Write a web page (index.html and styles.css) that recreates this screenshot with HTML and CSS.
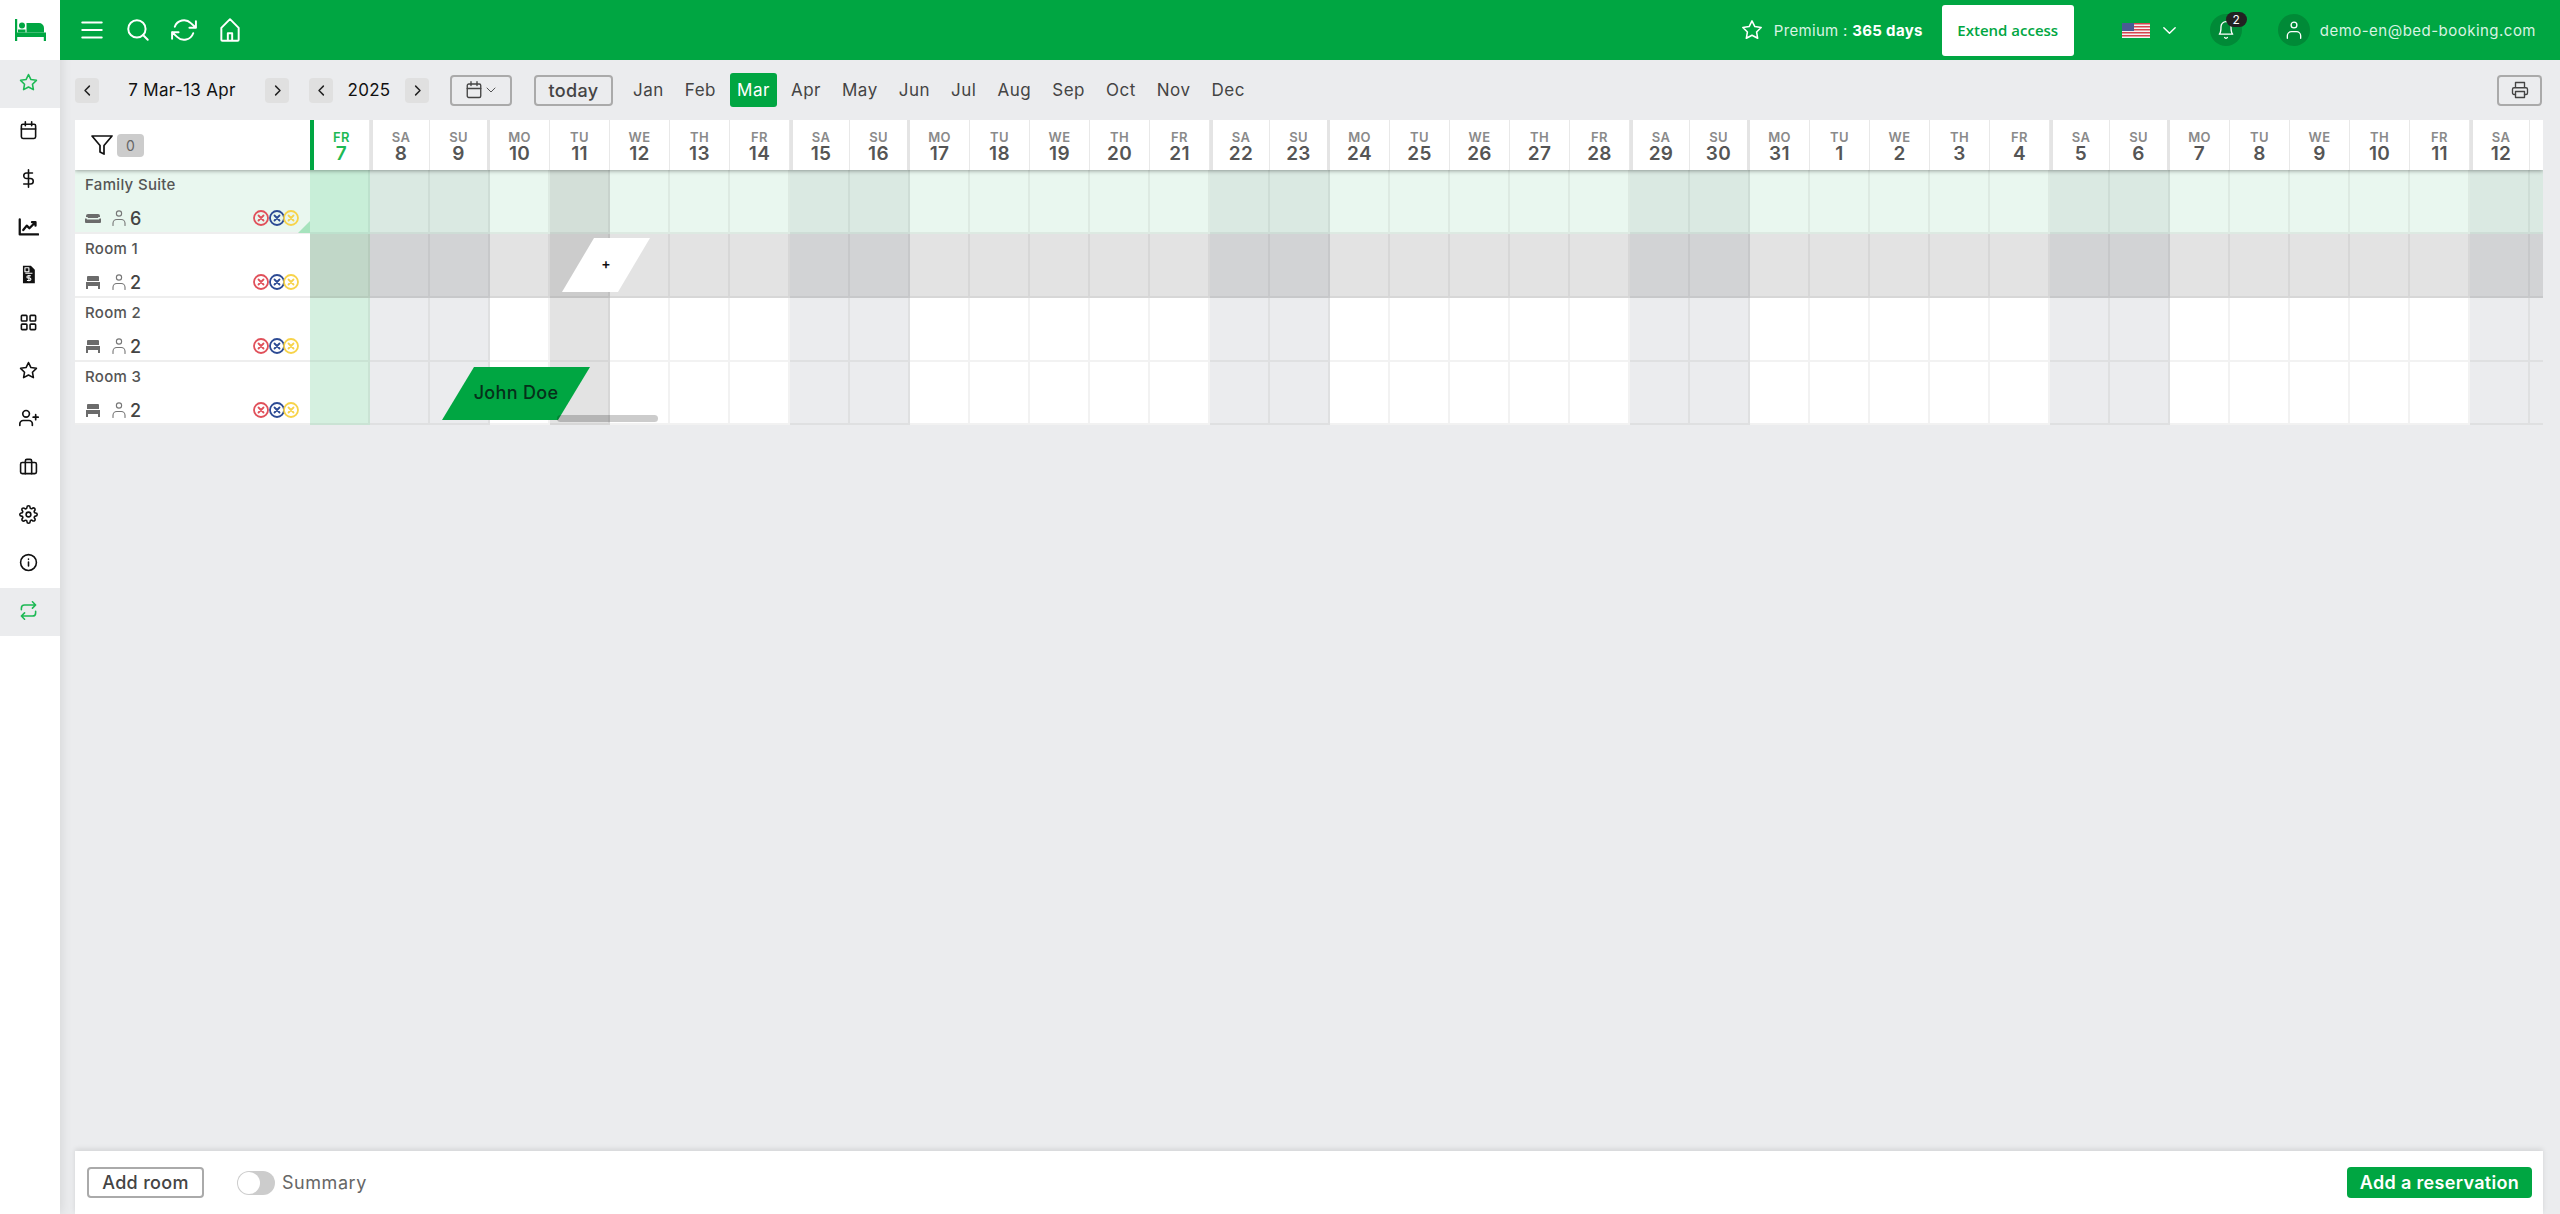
FILE: index.html
```html
<!DOCTYPE html>
<html>
<head>
	<meta charset="utf-8">
	<meta name="viewport" content="width=device-width, initial-scale=1">
	<title>Calendar</title>
	<link rel="stylesheet" href="styles.css">
</head>
<body>
	<svg class="defs">
		<symbol id="star" viewBox="0 0 24 24"><polygon points="12 2 15.09 8.26 22 9.27 17 14.14 18.18 21.02 12 17.77 5.82 21.02 7 14.14 2 9.27 8.91 8.26 12 2"/></symbol>
		<symbol id="user" viewBox="0 0 24 24"><path d="M20 22v-3a5 5 0 0 0-5-5H9a5 5 0 0 0-5 5v3"/><circle cx="12" cy="6" r="3.5"/></symbol>
		<symbol id="bed" viewBox="0 0 16 16"><path class="solid" d="M3 2h10a1 1 0 0 1 1 1v4H2V3a1 1 0 0 1 1-1zM1 8h14v4H1zM1 12h2v3H1zM13 12h2v3h-2z"/></symbol>
		<symbol id="sofa" viewBox="0 0 16 16"><path class="solid" d="M3 4h10a2 2 0 0 1 2 2v1h-1a1 1 0 0 0-1 1H3a1 1 0 0 0-1-1H1V6a2 2 0 0 1 2-2zM0 8.500h1.500l.5 1h12l.5-1H16V12a1 1 0 0 1-1 1H1a1 1 0 0 1-1-1z"/></symbol>
		<symbol id="x-dot" viewBox="0 0 16 16"><circle cx="8" cy="8" r="7"/><path d="M5.500 5.500l5 5M10.500 5.500l-5 5"/></symbol>
		<symbol id="left" viewBox="0 0 24 24"><polyline points="15 5 8 12 15 19"/></symbol>
		<symbol id="right" viewBox="0 0 24 24"><polyline points="9 5 16 12 9 19"/></symbol>
	</svg>

	<nav class="sidebar">
		<div class="logo">
			<svg class="bed-logo" viewBox="0 0 31 22"><path d="M0 0h2.200v13.500H31V22h-2.200v-4H2.200v4H0z"/><circle cx="7" cy="6.500" r="3"/><path d="M11.500 4h12.500a5 5 0 0 1 5 5v4.500H11.500zM3 10.500h7.500v3H3z"/></svg>
		</div>
		<a class="nav-item on"><svg class="ic"><use href="#star"/></svg></a>
		<a class="nav-item"><svg class="ic" viewBox="0 0 24 24"><rect x="3" y="4" width="18" height="18" rx="2"/><path d="M16 1v5M8 1v5M3 10h18"/></svg></a>
		<a class="nav-item"><svg class="ic" viewBox="0 0 24 24"><path d="M12 1v22M17 5H9.500a3.500 3.500 0 0 0 0 7h5a3.500 3.500 0 0 1 0 7H6"/></svg></a>
		<a class="nav-item"><svg class="ic bold" viewBox="0 0 24 24"><path d="M2 4v17h21"/><path d="M6 16l4-5 3 3 6-6M16 7h4v4"/></svg></a>
		<a class="nav-item"><svg class="ic" viewBox="0 0 24 24"><path class="solid" d="M5 1h10l5 5v17H5z"/><path class="knock" d="M7.500 3.500h5v5h-5zM8 10.500h9"/><path class="knock" d="M15 13.500h-3.500a1.500 1.500 0 0 0 0 3h2a1.500 1.500 0 0 1 0 3H10M12.500 12.500v8"/></svg></a>
		<a class="nav-item"><svg class="ic" viewBox="0 0 24 24"><rect x="3" y="3" width="7" height="7" rx="1"/><rect x="14" y="3" width="7" height="7" rx="1"/><rect x="14" y="14" width="7" height="7" rx="1"/><rect x="3" y="14" width="7" height="7" rx="1"/></svg></a>
		<a class="nav-item"><svg class="ic"><use href="#star"/></svg></a>
		<a class="nav-item"><svg class="ic wide" viewBox="0 0 24 24"><path d="M16 21v-2a4 4 0 0 0-4-4H5a4 4 0 0 0-4 4v2"/><circle cx="8.500" cy="7" r="4"/><path d="M20 8v6M23 11h-6"/></svg></a>
		<a class="nav-item"><svg class="ic" viewBox="0 0 24 24"><rect x="2" y="7" width="20" height="14" rx="2"/><path d="M16 21V5a2 2 0 0 0-2-2h-4a2 2 0 0 0-2 2v16"/></svg></a>
		<a class="nav-item"><svg class="ic" viewBox="0 0 24 24"><circle cx="12" cy="12" r="3"/><path d="M19.400 15a1.650 1.650 0 0 0 .33 1.820l.06.06a2 2 0 0 1 0 2.830 2 2 0 0 1-2.830 0l-.06-.06a1.650 1.650 0 0 0-1.820-.33 1.650 1.650 0 0 0-1 1.510V21a2 2 0 0 1-2 2 2 2 0 0 1-2-2v-.09A1.650 1.650 0 0 0 9 19.400a1.650 1.650 0 0 0-1.820.33l-.06.06a2 2 0 0 1-2.830 0 2 2 0 0 1 0-2.830l.06-.06a1.650 1.650 0 0 0 .33-1.820 1.650 1.650 0 0 0-1.510-1H3a2 2 0 0 1-2-2 2 2 0 0 1 2-2h.09A1.650 1.650 0 0 0 4.600 9a1.650 1.650 0 0 0-.33-1.820l-.06-.06a2 2 0 0 1 0-2.830 2 2 0 0 1 2.830 0l.06.06a1.650 1.650 0 0 0 1.820.33H9a1.650 1.650 0 0 0 1-1.510V3a2 2 0 0 1 2-2 2 2 0 0 1 2 2v.09a1.650 1.650 0 0 0 1 1.510 1.650 1.650 0 0 0 1.820-.33l.06-.06a2 2 0 0 1 2.830 0 2 2 0 0 1 0 2.830l-.06.06a1.650 1.650 0 0 0-.33 1.820V9a1.650 1.650 0 0 0 1.510 1H21a2 2 0 0 1 2 2 2 2 0 0 1-2 2h-.09a1.650 1.650 0 0 0-1.510 1z"/></svg></a>
		<a class="nav-item"><svg class="ic" viewBox="0 0 24 24"><circle cx="12" cy="12" r="10"/><path d="M12 16.500v-5M12 8v-.5"/></svg></a>
		<a class="nav-item on"><svg class="ic" viewBox="0 0 24 24"><path d="M17 1l4 4-4 4M3 11V9a4 4 0 0 1 4-4h14M7 23l-4-4 4-4M21 13v2a4 4 0 0 1-4 4H3"/></svg></a>
	</nav>

	<div class="main">
		<header class="topbar">
			<svg class="top-ic" viewBox="0 0 24 24"><path d="M3 5h18M3 12h18M3 19h18"/></svg>
			<svg class="top-ic" viewBox="0 0 24 24"><circle cx="11" cy="11" r="8"/><path d="M21 21l-4.350-4.350"/></svg>
			<svg class="top-ic" viewBox="0 0 24 24"><path d="M23 4v6h-6M1 20v-6h6M3.510 9a9 9 0 0 1 14.850-3.360L23 10M1 14l4.640 4.360A9 9 0 0 0 20.490 15"/></svg>
			<svg class="top-ic" viewBox="0 0 24 24"><path d="M4 21V10l8-8 8 8v11a1 1 0 0 1-1 1H5a1 1 0 0 1-1-1zM10 22v-7h4v7"/></svg>

			<div class="account">
				<svg class="premium-star"><use href="#star"/></svg>
				<span class="premium">Premium : <b>365 days</b></span>
				<a class="extend">Extend access</a>
				<svg class="flag" viewBox="0 0 28 15">
					<rect width="28" height="15" fill="#f4f4f4"/>
					<path fill="#d8434e" d="M0 0h28v1.500H0zM0 3h28v1.500H0zM0 6h28v1.500H0zM0 9h28v1.500H0zM0 12h28v1.500H0z"/>
					<rect width="12" height="8" fill="#4a5a94"/>
				</svg>
				<svg class="chev" viewBox="0 0 24 24"><path d="M4 8l8 8 8-8"/></svg>
				<span class="round bell">
					<svg viewBox="0 0 24 24"><path d="M18 8A6 6 0 0 0 6 8c0 7-2 9-2 9h16s-2-2-2-9zM13.700 21a2 2 0 0 1-3.400 0"/></svg>
					<span class="badge">2</span>
				</span>
				<span class="round person"><svg><use href="#user"/></svg></span>
				<span class="email">demo-en@bed-booking.com</span>
			</div>
		</header>

		<div class="toolbar">
			<button class="step"><svg><use href="#left"/></svg></button>
			<span class="range">7 Mar-13 Apr</span>
			<button class="step"><svg><use href="#right"/></svg></button>
			<button class="step year-prev"><svg><use href="#left"/></svg></button>
			<span class="year">2025</span>
			<button class="step"><svg><use href="#right"/></svg></button>
			<button class="outline picker">
				<svg viewBox="0 0 24 24"><rect x="3" y="4" width="18" height="18" rx="2"/><path d="M16 1v5M8 1v5M3 10h18"/></svg>
				<svg class="mini" viewBox="0 0 24 24"><path d="M4 8l8 8 8-8"/></svg>
			</button>
			<button class="outline today">today</button>
			<div class="months">
				<a>Jan</a><a>Feb</a><a class="on">Mar</a><a>Apr</a><a>May</a><a>Jun</a><a>Jul</a><a>Aug</a><a>Sep</a><a>Oct</a><a>Nov</a><a>Dec</a>
			</div>
			<button class="outline print">
				<svg viewBox="0 0 24 24"><path d="M6 9V2h12v7M6 18H4a2 2 0 0 1-2-2v-5a2 2 0 0 1 2-2h16a2 2 0 0 1 2 2v5a2 2 0 0 1-2 2h-2"/><rect x="6" y="14" width="12" height="8"/></svg>
			</button>
		</div>

		<div class="planner">
			<div class="head">
				<div class="filter">
					<svg viewBox="0 0 24 24"><polygon points="22 3 2 3 10 12.460 10 19 14 21 14 12.460 22 3"/></svg>
					<span class="count">0</span>
				</div>
				<div class="day"><span>FR</span><b>7</b></div>
				<div class="day"><span>SA</span><b>8</b></div>
				<div class="day"><span>SU</span><b>9</b></div>
				<div class="day"><span>MO</span><b>10</b></div>
				<div class="day"><span>TU</span><b>11</b></div>
				<div class="day"><span>WE</span><b>12</b></div>
				<div class="day"><span>TH</span><b>13</b></div>
				<div class="day"><span>FR</span><b>14</b></div>
				<div class="day"><span>SA</span><b>15</b></div>
				<div class="day"><span>SU</span><b>16</b></div>
				<div class="day"><span>MO</span><b>17</b></div>
				<div class="day"><span>TU</span><b>18</b></div>
				<div class="day"><span>WE</span><b>19</b></div>
				<div class="day"><span>TH</span><b>20</b></div>
				<div class="day"><span>FR</span><b>21</b></div>
				<div class="day"><span>SA</span><b>22</b></div>
				<div class="day"><span>SU</span><b>23</b></div>
				<div class="day"><span>MO</span><b>24</b></div>
				<div class="day"><span>TU</span><b>25</b></div>
				<div class="day"><span>WE</span><b>26</b></div>
				<div class="day"><span>TH</span><b>27</b></div>
				<div class="day"><span>FR</span><b>28</b></div>
				<div class="day"><span>SA</span><b>29</b></div>
				<div class="day"><span>SU</span><b>30</b></div>
				<div class="day"><span>MO</span><b>31</b></div>
				<div class="day"><span>TU</span><b>1</b></div>
				<div class="day"><span>WE</span><b>2</b></div>
				<div class="day"><span>TH</span><b>3</b></div>
				<div class="day"><span>FR</span><b>4</b></div>
				<div class="day"><span>SA</span><b>5</b></div>
				<div class="day"><span>SU</span><b>6</b></div>
				<div class="day"><span>MO</span><b>7</b></div>
				<div class="day"><span>TU</span><b>8</b></div>
				<div class="day"><span>WE</span><b>9</b></div>
				<div class="day"><span>TH</span><b>10</b></div>
				<div class="day"><span>FR</span><b>11</b></div>
				<div class="day"><span>SA</span><b>12</b></div>
				<div class="day"></div>
			</div>

			<div class="row suite">
				<div class="room">
					<div class="room-name">Family Suite</div>
					<div class="room-info">
						<svg class="kind"><use href="#sofa"/></svg>
						<svg class="guest"><use href="#user"/></svg>
						<span class="beds">6</span>
						<span class="sync"><svg class="red"><use href="#x-dot"/></svg><svg class="blue"><use href="#x-dot"/></svg><svg class="yellow"><use href="#x-dot"/></svg></span>
					</div>
				</div>
				<i></i><i></i><i></i><i></i><i></i><i></i><i></i><i></i><i></i><i></i><i></i><i></i><i></i><i></i><i></i><i></i><i></i><i></i><i></i><i></i><i></i><i></i><i></i><i></i><i></i><i></i><i></i><i></i><i></i><i></i><i></i><i></i><i></i><i></i><i></i><i></i><i></i><i></i>
			</div>
			<div class="row hover">
				<div class="room">
					<div class="room-name">Room 1</div>
					<div class="room-info">
						<svg class="kind"><use href="#bed"/></svg>
						<svg class="guest"><use href="#user"/></svg>
						<span class="beds">2</span>
						<span class="sync"><svg class="red"><use href="#x-dot"/></svg><svg class="blue"><use href="#x-dot"/></svg><svg class="yellow"><use href="#x-dot"/></svg></span>
					</div>
				</div>
				<i></i><i></i><i></i><i></i><i></i><i></i><i></i><i></i><i></i><i></i><i></i><i></i><i></i><i></i><i></i><i></i><i></i><i></i><i></i><i></i><i></i><i></i><i></i><i></i><i></i><i></i><i></i><i></i><i></i><i></i><i></i><i></i><i></i><i></i><i></i><i></i><i></i><i></i>
			</div>
			<div class="row">
				<div class="room">
					<div class="room-name">Room 2</div>
					<div class="room-info">
						<svg class="kind"><use href="#bed"/></svg>
						<svg class="guest"><use href="#user"/></svg>
						<span class="beds">2</span>
						<span class="sync"><svg class="red"><use href="#x-dot"/></svg><svg class="blue"><use href="#x-dot"/></svg><svg class="yellow"><use href="#x-dot"/></svg></span>
					</div>
				</div>
				<i></i><i></i><i></i><i></i><i></i><i></i><i></i><i></i><i></i><i></i><i></i><i></i><i></i><i></i><i></i><i></i><i></i><i></i><i></i><i></i><i></i><i></i><i></i><i></i><i></i><i></i><i></i><i></i><i></i><i></i><i></i><i></i><i></i><i></i><i></i><i></i><i></i><i></i>
			</div>
			<div class="row last">
				<div class="room">
					<div class="room-name">Room 3</div>
					<div class="room-info">
						<svg class="kind"><use href="#bed"/></svg>
						<svg class="guest"><use href="#user"/></svg>
						<span class="beds">2</span>
						<span class="sync"><svg class="red"><use href="#x-dot"/></svg><svg class="blue"><use href="#x-dot"/></svg><svg class="yellow"><use href="#x-dot"/></svg></span>
					</div>
				</div>
				<i></i><i></i><i></i><i></i><i></i><i></i><i></i><i></i><i></i><i></i><i></i><i></i><i></i><i></i><i></i><i></i><i></i><i></i><i></i><i></i><i></i><i></i><i></i><i></i><i></i><i></i><i></i><i></i><i></i><i></i><i></i><i></i><i></i><i></i><i></i><i></i><i></i><i></i>
			</div>

			<div class="new-slot">+</div>
			<div class="booking">John Doe</div>
			<div class="scroll-thumb"></div>
		</div>

		<footer class="footer">
			<button class="outline add-room">Add room</button>
			<span class="switch"></span>
			<span class="switch-label">Summary</span>
			<button class="add-res">Add a reservation</button>
		</footer>
	</div>
</body>
</html>
```

FILE: styles.css
```css
* {
	box-sizing: border-box;
}
body {
	display: flex;
	height: 100vh;
	margin: 0;
	overflow: hidden;
	background: #ebecee;
	color: #444;
	font-family: Inter, "Open Sans", sans-serif;
	letter-spacing: 0.02em;
}
button {
	font: inherit;
	letter-spacing: inherit;
	padding: 0;
	cursor: pointer;
}
svg {
	display: block;
	fill: none;
	stroke: currentColor;
	stroke-width: 2;
	stroke-linecap: round;
	stroke-linejoin: round;
}
.defs {
	position: absolute;
	width: 0;
	height: 0;
}
.solid {
	fill: currentColor;
	stroke: none;
}
.knock {
	stroke: #fff;
	stroke-width: 1.4;
	stroke-linecap: butt;
}

/* sidebar */
.sidebar {
	position: relative;
	z-index: 1;
	flex: 0 0 60px;
	background: #fff;
	box-shadow: 0 0 12px rgba(0,0,0,0.12);
}
.logo {
	display: flex;
	align-items: center;
	justify-content: center;
	height: 60px;
}
.bed-logo {
	width: 31px;
	height: 22px;
	fill: #00a642;
	stroke: none;
}
.nav-item {
	display: flex;
	align-items: center;
	justify-content: center;
	height: 48px;
	padding: 0 3px 4px 0;
	color: #111;
}
.nav-item.on {
	background: #ebecee;
	color: #1db954;
}
.ic {
	width: 19px;
	height: 19px;
}
.ic.wide {
	width: 20px;
	height: 20px;
}
.ic.bold {
	width: 21px;
	height: 21px;
	stroke-width: 2.6;
}

/* top bar */
.main {
	flex: 1;
	min-width: 0;
	display: flex;
	flex-direction: column;
}
.topbar {
	position: relative;
	z-index: 2;
	flex: 0 0 60px;
	display: flex;
	align-items: center;
	gap: 20px;
	padding: 0 24px 0 19px;
	background: #00a642;
	color: #fff;
}
.top-ic {
	width: 26px;
	height: 26px;
	stroke-width: 1.8;
}
.account {
	margin-left: auto;
	display: flex;
	align-items: center;
	font-size: 15px;
}
.premium-star {
	width: 22px;
	height: 22px;
	stroke-width: 1.7;
	margin-right: 11px;
}
.premium {
	color: #d9f3e3;
	margin-right: 19px;
}
.premium b {
	color: #fff;
	font-weight: 700;
}
.extend {
	display: flex;
	align-items: center;
	justify-content: center;
	width: 132px;
	height: 51px;
	border-radius: 3px;
	background: #fff;
	color: #00a642;
	font-family: "Open Sans", sans-serif;
	font-size: 15px;
	font-weight: 600;
	letter-spacing: 0;
	margin-right: 48px;
}
.flag {
	width: 28px;
	height: 15px;
	stroke: none;
	margin-right: 11px;
}
.chev {
	width: 17px;
	height: 17px;
	margin-right: 32px;
}
.round {
	position: relative;
	display: flex;
	align-items: center;
	justify-content: center;
	width: 32px;
	height: 32px;
	border-radius: 50%;
	background: #008a37;
}
.round svg {
	width: 20px;
	height: 20px;
	stroke-width: 1.6;
}
.bell {
	margin-right: 36px;
}
.badge {
	position: absolute;
	top: -2px;
	left: 16px;
	width: 21px;
	height: 15px;
	border-radius: 8px;
	background: #222;
	color: #fff;
	font-size: 12px;
	line-height: 15px;
	text-align: center;
}
.email {
	margin-left: 10px;
	color: #d9f3e3;
	letter-spacing: 0.032em;
}

/* date toolbar */
.toolbar {
	flex: 0 0 60px;
	display: flex;
	align-items: center;
	padding: 0 18px 0 15px;
	font-size: 17px;
	color: #111;
}
.step {
	display: flex;
	align-items: center;
	justify-content: center;
	width: 24px;
	height: 25px;
	border: none;
	border-radius: 4px;
	background: #e0e0e0;
	color: #222;
}
.step svg {
	width: 15px;
	height: 15px;
	stroke-width: 2.4;
}
.range {
	width: 166px;
	text-align: center;
}
.year-prev {
	margin-left: 20px;
}
.year {
	width: 72px;
	text-align: center;
}
.outline {
	height: 31px;
	border: 2px solid #aaa;
	border-radius: 4px;
	background: transparent;
	color: #444;
	font-weight: 500;
}
.picker {
	display: flex;
	align-items: center;
	justify-content: center;
	gap: 2px;
	width: 62px;
	margin-left: 21px;
}
.picker svg {
	width: 18px;
	height: 18px;
	stroke-width: 1.8;
}
.picker .mini {
	width: 12px;
	height: 12px;
}
.today {
	width: 79px;
	margin-left: 22px;
	font-size: 18px;
}
.months {
	display: flex;
	align-items: center;
	gap: 7px;
	margin-left: 13px;
	font-size: 17px;
	letter-spacing: 0.03em;
	color: #444;
}
.months a {
	padding: 0 7px;
	line-height: 34px;
	border-radius: 3px;
}
.months .on {
	background: #00a642;
	color: #fff;
}
.print {
	display: flex;
	align-items: center;
	justify-content: center;
	width: 45px;
	margin-left: auto;
}
.print svg {
	width: 18px;
	height: 18px;
	stroke-width: 1.8;
}

/* planner */
.planner {
	position: relative;
	flex: 1;
	min-height: 0;
	margin: 0 17px 0 15px;
	overflow: hidden;
}
.head, .row {
	display: grid;
	grid-template-columns: 235px repeat(38, 60px);
}
.head {
	position: relative;
	z-index: 1;
	height: 50px;
	background: #fff;
	box-shadow: 0 1px 4px rgba(0,0,0,0.35);
}
.filter {
	display: flex;
	align-items: center;
	gap: 3px;
	padding-left: 15px;
	color: #111;
}
.filter svg {
	width: 24px;
	height: 24px;
	stroke-width: 1.7;
}
.count {
	width: 27px;
	height: 23px;
	border-radius: 4px;
	background: #ccc;
	color: #666;
	font-size: 14px;
	line-height: 23px;
	text-align: center;
}
.day {
	display: flex;
	flex-direction: column;
	align-items: center;
	padding-top: 10px;
	border-right: 1px solid #e8e8e8;
	color: #555;
	white-space: nowrap;
}
.day span {
	font-size: 13px;
	line-height: 15px;
	font-weight: 600;
	color: #8a8a8a;
}
.day b {
	font-size: 19px;
	line-height: 18px;
	font-weight: 600;
}
.day:nth-child(2) {
	border-left: 4px solid #00a642;
	color: #1db954;
}
.day:nth-child(2) span {
	color: #1db954;
}
.day:nth-child(7n+3) {
	border-left: 3px solid #e4e4e4;
}
.day:nth-child(7n+4) {
	border-right: 3px solid #e4e4e4;
}

.row {
	height: 64px;
	background: #fff;
	--cell: #fff;
	--weekend: #ebecee;
	--today: #d5f0e0;
	--picked: #e3e3e3;
}
.row.suite {
	--cell: #e9f7ef;
	--weekend: #dae9e2;
	--today: #c8eed8;
	--picked: #d3dfd8;
}
.row.hover {
	--cell: #e3e3e3;
	--weekend: #d2d3d5;
	--today: #c1d7c8;
	--picked: #cccccc;
}
.row.last {
	height: 63px;
}
.row i {
	display: block;
	background: var(--cell);
	border-right: 2px solid rgba(0,0,0,0.05);
	border-bottom: 2px solid rgba(0,0,0,0.05);
}
.row i:nth-child(7n+3), .row i:nth-child(7n+4) {
	background: var(--weekend);
}
.row i:nth-child(2) {
	background: var(--today);
}
.row i:nth-child(6) {
	background: var(--picked);
}
.room {
	position: relative;
	padding: 6px 11px 0 10px;
	border-bottom: 2px solid #eee;
	font-size: 15px;
	font-weight: 500;
	color: #555;
}
.suite .room {
	background: #e9f7ef;
}
.suite .room::after {
	content: "";
	position: absolute;
	right: 0;
	bottom: -1px;
	width: 12px;
	height: 12px;
	background: #a6e3bd;
	clip-path: polygon(100% 0, 100% 100%, 0 100%);
}
.room-name {
	line-height: 18px;
}
.room-info {
	display: flex;
	align-items: center;
	height: 20px;
	margin-top: 14px;
}
.kind {
	width: 16px;
	height: 16px;
	color: #6b6b6b;
	stroke: none;
}
.guest {
	width: 18px;
	height: 18px;
	margin-left: 9px;
	color: #777;
	stroke-width: 1.5;
}
.beds {
	margin-left: 2px;
	font-size: 18px;
	font-weight: 500;
	color: #444;
}
.sync {
	display: flex;
	margin-left: auto;
}
.sync svg {
	width: 16px;
	height: 16px;
	stroke-width: 1.8;
}
.sync .red {
	color: #e0505a;
}
.sync .blue {
	color: #2c4a94;
}
.sync .yellow {
	margin-left: -2px;
	color: #f7d34a;
}

/* things lying over the grid */
.new-slot, .booking {
	position: absolute;
	z-index: 2;
	display: flex;
	align-items: center;
	justify-content: center;
}
.new-slot {
	left: 487px;
	top: 118px;
	width: 88px;
	height: 54px;
	padding-bottom: 4px;
	background: #fff;
	color: #111;
	font-size: 14px;
	font-weight: 600;
	clip-path: polygon(32px 0, 100% 0, 56px 100%, 0 100%);
}
.booking {
	left: 367px;
	top: 247px;
	width: 148px;
	height: 53px;
	padding-bottom: 2px;
	background: #00a642;
	color: #06301a;
	font-size: 18px;
	font-weight: 500;
	clip-path: polygon(32px 0, 100% 0, 116px 100%, 0 100%);
}
.scroll-thumb {
	position: absolute;
	z-index: 3;
	left: 482px;
	top: 295px;
	width: 101px;
	height: 7px;
	border-radius: 4px;
	background: rgba(0,0,0,0.2);
}

/* footer */
.footer {
	flex: 0 0 63px;
	display: flex;
	align-items: center;
	margin: 0 17px 0 15px;
	padding: 0 11px 0 12px;
	background: #fff;
	box-shadow: 0 -2px 5px rgba(0,0,0,0.1);
	font-size: 18px;
}
.add-room {
	width: 117px;
	font-weight: 500;
}
.switch {
	position: relative;
	width: 38px;
	height: 24px;
	margin-left: 33px;
	border-radius: 12px;
	background: #ccc;
}
.switch::after {
	content: "";
	position: absolute;
	left: 1px;
	top: 1px;
	width: 22px;
	height: 22px;
	border-radius: 50%;
	background: #fff;
}
.switch-label {
	margin-left: 7px;
	color: #666;
	letter-spacing: 0.03em;
}
.add-res {
	width: 185px;
	height: 31px;
	margin-left: auto;
	border: none;
	border-radius: 4px;
	background: #00a642;
	color: #fff;
	font-weight: 600;
}
```
